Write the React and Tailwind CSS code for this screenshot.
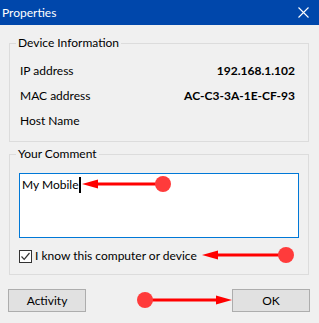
import React from "react"

const font = { fontFamily: 'Lato, "Noto Sans", sans-serif' }

function Arrow({ x1, x2, y, dir }) {
  // x1 = circle centre, x2 = arrow tip
  const head = dir === "left" ? x2 + 16 : x2 - 16
  return (
    <g>
      <line x1={x1} y1={y} x2={head} y2={y} stroke="#f00" strokeWidth="3" />
      <polygon points={`${x2},${y} ${head},${y - 4.5} ${head},${y + 4.5}`} fill="#f00" />
      <circle cx={x1} cy={y} r="8" fill="#ff3b3b" />
    </g>
  )
}

export default function App() {
  return (
    <div className="relative w-[319px] h-[323px] bg-[#f0f0f0] text-[12px] text-black overflow-hidden" style={font}>
      <div className="h-[25px] bg-[#0047ab] flex items-center justify-between pl-[2px] pr-[10px] text-white">
        <span className="text-[12px] leading-[16px]">Properties</span>
        <svg width="11" height="11" viewBox="0 0 11 11">
          <path d="M0.5 0.5 L10.5 10.5 M10.5 0.5 L0.5 10.5" stroke="#fff" strokeWidth="1.1" />
        </svg>
      </div>

      <div className="flex flex-col pl-[9px] pr-[10px]">
        <fieldset className="mt-[10px] border border-[#dcdcdc] pl-[10px] pr-[13px] pt-[8px] pb-[8px]">
          <legend className="-ml-[4px] px-[2px] leading-[16px]">Device Information</legend>
          <div className="flex flex-col">
            <div className="h-[24px] flex items-center justify-between">
              <span>IP address</span>
              <span className="font-bold">192.168.1.102</span>
            </div>
            <div className="h-[25px] flex items-center justify-between">
              <span>MAC address</span>
              <span className="font-bold">AC-C3-3A-1E-CF-93</span>
            </div>
            <div className="h-[25px] flex items-center">
              <span>Host Name</span>
            </div>
          </div>
        </fieldset>

        <fieldset className="mt-[4px] border border-[#dcdcdc] pl-[9px] pr-[9px] pt-[11px] pb-[11px]">
          <legend className="-ml-[3px] px-[2px] leading-[16px]">Your Comment</legend>
          <div className="h-[65px] border border-[#0078d7] bg-white px-[2px] pt-[3px] leading-[16px] flex items-start">
            <span>My Mobile</span>
            <span className="inline-block w-[2px] h-[16px] bg-black"></span>
          </div>
          <label className="mt-[11px] flex items-center gap-[3px] h-[14px]">
            <span className="w-[13px] h-[13px] border border-[#333] bg-white flex items-center justify-center">
              <svg width="11" height="11" viewBox="0 0 11 11">
                <path d="M1.5 5.5 L4.2 8.3 L9.5 2" stroke="#333" strokeWidth="1.2" fill="none" />
              </svg>
            </span>
            <span className="leading-[16px]">I know this computer or device</span>
          </label>
        </fieldset>

        <div className="mt-[14px] flex justify-between">
          <button className="w-[78px] h-[23px] bg-[#e1e1e1] border border-[#adadad] -ml-[1px]">Activity</button>
          <button className="w-[78px] h-[23px] bg-[#e1e1e1] border border-[#adadad] -mr-[1px]">OK</button>
        </div>
      </div>

      <svg className="absolute left-0 top-0 pointer-events-none" width="319" height="323">
        <Arrow x1={163} x2={82} y={184} dir="left" />
        <Arrow x1={286} x2={202} y={255} dir="left" />
        <Arrow x1={145} x2={232} y={300} dir="right" />
      </svg>
    </div>
  )
}
